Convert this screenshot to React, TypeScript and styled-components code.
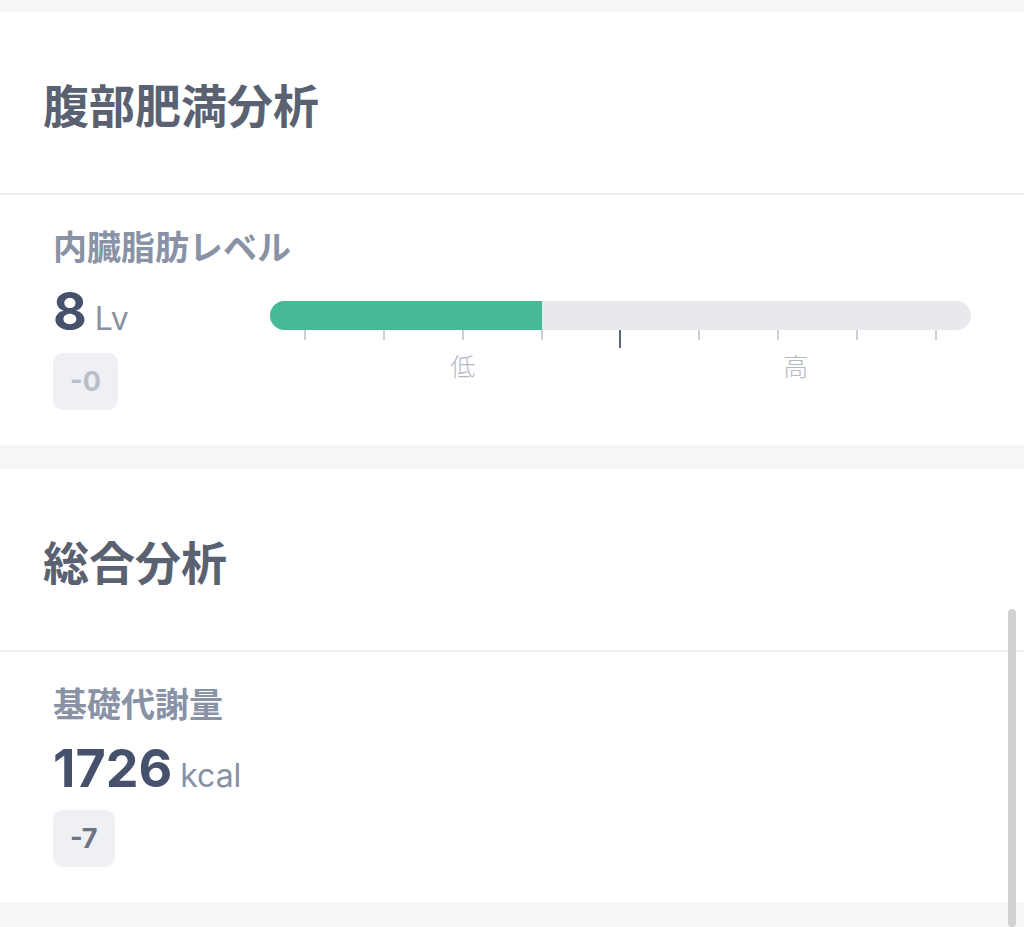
import React from "react";
import styled, { createGlobalStyle } from "styled-components";

const GlobalStyle = createGlobalStyle`
  html, body { margin: 0; padding: 0; background: #f5f6f8; }
  body { font-family: "Noto Sans CJK JP", "Noto Sans", sans-serif; }
  * { box-sizing: border-box; }
`;

const Page = styled.div`
  position: relative;
  height: 927px;
  overflow: hidden;
  padding-top: 12px;
  display: flex;
  flex-direction: column;
  gap: 24px;
`;

const Card = styled.section`
  background: #ffffff;
  display: flex;
  flex-direction: column;
`;

const Header = styled.header`
  height: 183px;
  display: flex;
  align-items: center;
  padding-left: 43px;
  border-bottom: 2px solid #eeeff2;
`;

const Title = styled.h2`
  margin: 0;
  font-family: "Noto Sans CJK JP", sans-serif;
  font-size: 46px;
  line-height: 56px;
  font-weight: 700;
  color: #5a6170;
`;

const Body = styled.div`
  padding: 33px 53px 35px 53px;
`;

const Label = styled.div`
  font-family: "Noto Sans CJK JP", sans-serif;
  font-size: 34px;
  line-height: 36px;
  font-weight: 600;
  color: #8993a5;
`;

const Row = styled.div`
  margin-top: 22px;
  display: grid;
  grid-template-columns: 217px 1fr;
`;

const LeftCol = styled.div`
  display: flex;
  flex-direction: column;
  align-items: flex-start;
`;

const Value = styled.div`
  display: flex;
  align-items: baseline;
  height: 52px;
  line-height: 52px;
`;

const Number = styled.span`
  font-family: Inter, "Noto Sans", sans-serif;
  font-size: 52px;
  font-weight: 700;
  color: #46526b;
`;

const Unit = styled.span`
  margin-left: 8px;
  font-family: Inter, "Noto Sans", sans-serif;
  font-size: 32px;
  font-weight: 400;
  color: #8891a3;
`;

const Badge = styled.div<{ $muted?: boolean }>`
  margin-top: 15px;
  height: 57px;
  padding: 0 17px;
  border-radius: 10px;
  background: #eef0f4;
  display: flex;
  align-items: center;
  justify-content: center;
  font-family: Inter, "Noto Sans", sans-serif;
  font-size: 27px;
  font-weight: 700;
  color: ${(p) => (p.$muted ? "#b9bec8" : "#6b7384")};
`;

const Scale = styled.div`
  padding-top: 15px;
`;

const Track = styled.div`
  height: 29px;
  border-radius: 15px;
  background: #e8e9ed;
  overflow: hidden;
  display: flex;
`;

const Fill = styled.div`
  height: 100%;
  background: #46b996;
`;

const Ticks = styled.div`
  height: 18px;
  display: flex;
  justify-content: space-between;
  align-items: flex-start;
  padding: 0 calc(5% - 1px);
`;

const Tick = styled.div<{ $marker?: boolean }>`
  width: 2px;
  height: ${(p) => (p.$marker ? "18px" : "10px")};
  background: ${(p) => (p.$marker ? "#5b6579" : "#cdd0d6")};
`;

const ScaleLabels = styled.div`
  margin-top: 1px;
  display: grid;
  grid-template-columns: 15% 25% 22.5% 25% 12.5%;
`;

const ScaleLabel = styled.div<{ $col: number }>`
  grid-column: ${(p) => p.$col};
  text-align: center;
  font-family: "Noto Sans CJK JP", sans-serif;
  font-size: 25px;
  line-height: 32px;
  font-weight: 300;
  color: #b3b8c2;
`;

const Scrollbar = styled.div`
  position: absolute;
  right: 8px;
  top: 609px;
  bottom: 0;
  width: 8px;
  border-radius: 4px;
  background: #d1d1d3;
`;

export default function App() {
  const fillPct = 38.75;
  return (
    <>
      <GlobalStyle />
      <Page>
        <Card>
          <Header>
            <Title>腹部肥満分析</Title>
          </Header>
          <Body>
            <Label>内臓脂肪レベル</Label>
            <Row>
              <LeftCol>
                <Value>
                  <Number>8</Number>
                  <Unit>Lv</Unit>
                </Value>
                <Badge $muted>-0</Badge>
              </LeftCol>
              <Scale>
                <Track>
                  <Fill style={{ width: `${fillPct}%` }} />
                </Track>
                <Ticks>
                  {Array.from({ length: 9 }).map((_, i) => (
                    <Tick key={i} $marker={i === 4} />
                  ))}
                </Ticks>
                <ScaleLabels>
                  <ScaleLabel $col={2}>低</ScaleLabel>
                  <ScaleLabel $col={4}>高</ScaleLabel>
                </ScaleLabels>
              </Scale>
            </Row>
          </Body>
        </Card>
        <Card>
          <Header>
            <Title>総合分析</Title>
          </Header>
          <Body>
            <Label>基礎代謝量</Label>
            <Row>
              <LeftCol>
                <Value>
                  <Number>1726</Number>
                  <Unit>kcal</Unit>
                </Value>
                <Badge>-7</Badge>
              </LeftCol>
            </Row>
          </Body>
        </Card>
        <Scrollbar />
      </Page>
    </>
  );
}
